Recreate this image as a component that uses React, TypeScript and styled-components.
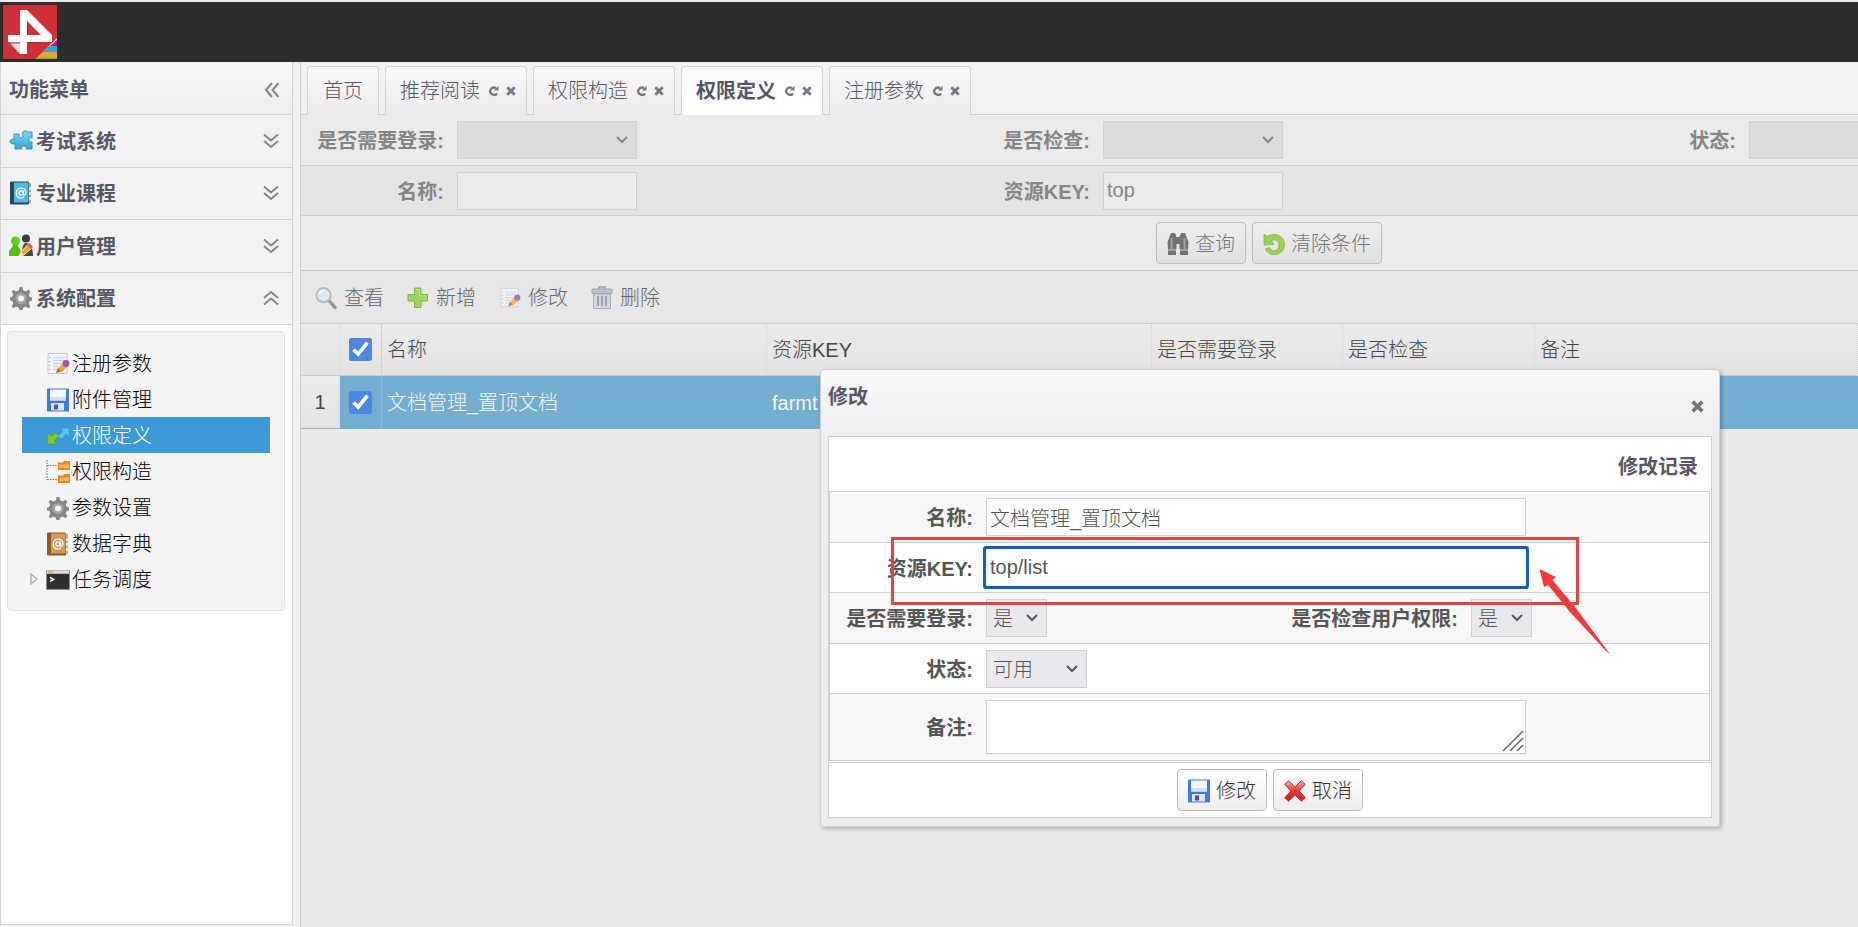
import React, { useId } from "react";
import styled, { createGlobalStyle, css } from "styled-components";

const GlobalStyle = createGlobalStyle`
  *, *::before, *::after { box-sizing: border-box; }
  html, body, #root { height: 100%; }
  body {
    margin: 0;
    overflow: hidden;
    background: #f2f2f2;
    font-family: "Liberation Sans", "Noto Sans CJK SC", sans-serif;
    font-size: 20px;
    font-weight: 300;
    line-height: 24px;
    color: #000;
  }
  button, input, select, textarea {
    font: inherit;
    color: inherit;
    margin: 0;
  }
  button { background: none; border: 0; padding: 0; cursor: pointer; }
  svg { display: block; flex: none; }
`;

/* ---------- page frame ---------- */

const Page = styled.div`
  display: flex;
  flex-direction: column;
  height: 100vh;
`;

const TopBar = styled.header`
  flex: none;
  height: 62px;
  padding: 3px;
  border-top: 2px solid #ececec;
  background: #2d2d2d;
`;

const Body = styled.div`
  flex: 1;
  min-height: 0;
  display: flex;
`;

const Sidebar = styled.aside`
  flex: none;
  display: flex;
  flex-direction: column;
  width: 293px;
  margin-bottom: 2px;
  border: 1px solid #d3d3d3;
  border-top: 0;
  background: #fff;
`;

const SideTitle = styled.div`
  display: flex;
  align-items: center;
  justify-content: space-between;
  height: 53px;
  padding: 4px 12px 0 8px;
  border-bottom: 1px solid #d3d3d3;
  background: linear-gradient(#f8f8f8, #eeeeee);
  font-weight: 700;
  color: #575765;
`;

const Groups = styled.nav`
  display: grid;
  grid-auto-rows: 1fr;
  height: 210px;
`;

const GroupButton = styled.button`
  display: flex;
  align-items: center;
  gap: 3px;
  padding: 0 13px 0 8px;
  border-bottom: 1px solid #d3d3d3;
  background: #f2f2f2;
  font-weight: 700;
  color: #575765;
`;

const GroupLabel = styled.span`
  flex: 1;
  padding-top: 2px;
  text-align: left;
`;

const Tree = styled.ul`
  list-style: none;
  margin: 6px 7px 6px 6px;
  padding: 13px 14px;
  border: 1px solid #e3e3e3;
  border-radius: 4px;
  background: #f4f4f4;
`;

const TreeItem = styled.li<{ $active?: boolean }>`
  display: flex;
  align-items: center;
  height: 36px;
  background: ${(p) => (p.$active ? "#3d9ad8" : "transparent")};
  color: ${(p) => (p.$active ? "#fff" : "#000")};
`;

const TreeToggle = styled.span`
  display: flex;
  justify-content: center;
  width: 24px;
`;

const TreeLink = styled.a`
  display: flex;
  align-items: center;
  gap: 2px;
  padding-top: 2px;
  color: inherit;
  text-decoration: none;
`;

const Main = styled.main`
  flex: 1;
  min-width: 0;
  display: flex;
  flex-direction: column;
  margin-left: 7px;
  border-left: 1px solid #cfcfcf;
  background: #eaeaea;
`;

/* ---------- tabs ---------- */

const TabBar = styled.div`
  flex: none;
  display: flex;
  align-items: flex-end;
  gap: 6px;
  height: 53px;
  padding: 0 6px;
  border-bottom: 1px solid #cfcfcf;
  background: #f2f2f2;
`;

const Tab = styled.div<{ $active?: boolean; $plain?: boolean }>`
  display: flex;
  align-items: center;
  gap: 5px;
  height: 49px;
  margin-bottom: -1px;
  padding: ${(p) => (p.$plain ? "0 15px" : "0 7px 0 14px")};
  border: 1px solid #d3d3d3;
  border-bottom: 0;
  border-radius: 4px 4px 0 0;
  background: ${(p) => (p.$active ? "linear-gradient(#f8f8f8, #ffffff 60%)" : "linear-gradient(#f9f9f9, #ebebeb)")};
  color: #575765;
  font-weight: ${(p) => (p.$active ? 700 : 300)};
`;

const TabTools = styled.div`
  display: flex;
`;

const TabTool = styled.button`
  width: 17px;
  height: 16px;
  display: flex;
  align-items: center;
  justify-content: center;
`;

/* ---------- shared fields ---------- */

const fieldBox = css`
  height: 38px;
  border: 1px solid #d0d0d0;
  border-radius: 0;
  outline: none;
`;

const TextInput = styled.input<{ $width: number; $muted?: boolean; $focused?: boolean }>`
  ${fieldBox}
  width: ${(p) => p.$width}px;
  padding: 0 3px;
  background: ${(p) => (p.$muted ? "#ebebeb" : "#fff")};
  ${(p) =>
    p.$focused &&
    css`
      height: 37px;
      border-color: #fff;
      border-radius: 1px;
      box-shadow: 0 0 0 3px #0f5fc4;
    `}
`;

const SelectWrap = styled.span<{ $width: number }>`
  position: relative;
  display: block;
  width: ${(p) => p.$width}px;

  svg {
    position: absolute;
    right: 9px;
    top: 15px;
    pointer-events: none;
  }
`;

const SelectBox = styled.select<{ $muted?: boolean }>`
  ${fieldBox}
  display: block;
  appearance: none;
  width: 100%;
  padding: 2px 6px 0;
  background: ${(p) => (p.$muted ? "#dcdcdf" : "#e9e9ed")};
`;

const PushButton = styled.button`
  display: flex;
  align-items: center;
  gap: 6px;
  height: 42px;
  padding: 1px 10px 0;
  border: 1px solid #bbb;
  border-radius: 4px;
  background: linear-gradient(#ffffff, #eeeeee);
  color: #333;

  svg { width: 22px; }
`;

const MutedPushButton = styled(PushButton)`
  background: linear-gradient(#efefef, #e0e0e0);
  color: #777;

  svg { opacity: 0.75; }
`;

/* ---------- search form ---------- */

const SearchForm = styled.form`
  flex: none;
  overflow: hidden;
  color: #858585;
`;

const SearchRow = styled.div`
  display: grid;
  grid-template-columns: repeat(3, 156px 490px);
  align-items: center;
  width: 1938px;
  height: 51px;
  border-bottom: 1px solid #cfcfcf;
  background: #ebebeb;

  &:nth-child(2) {
    height: 50px;
    background: #e5e5e5;
  }
`;

const FieldLabel = styled.label<{ $width?: number }>`
  width: ${(p) => (p.$width ? `${p.$width}px` : "auto")};
  padding: 2px 13px 0 0;
  text-align: right;
  font-weight: 700;
`;

const SearchActions = styled.div`
  display: flex;
  align-items: center;
  justify-content: center;
  gap: 6px;
  width: 1936px;
  height: 55px;
  border-bottom: 1px solid #c8c8c8;
  background: #ebebeb;
`;

/* ---------- data grid ---------- */

const Toolbar = styled.div`
  flex: none;
  display: flex;
  align-items: center;
  gap: 23px;
  height: 53px;
  padding: 2px 14px 0;
  border-bottom: 1px solid #cfcfcf;
  background: #e7e7e7;
`;

const ToolButton = styled.button`
  display: flex;
  align-items: center;
  gap: 7px;
  color: #666;

  svg {
    width: 22px;
    opacity: 0.75;
  }
`;

const Grid = styled.table`
  flex: none;
  width: 100%;
  table-layout: fixed;
  border-collapse: separate;
  border-spacing: 0;

  th, td {
    height: 53px;
    padding: 0 5px;
    text-align: left;
    font-weight: 300;
    white-space: nowrap;
    overflow: hidden;
  }
  th {
    height: 52px;
    border-bottom: 1px solid #cfcfcf;
    border-right: 1px dotted #d6d6d6;
    background: linear-gradient(#ebebeb, #e3e3e3);
    color: #444;
  }
  td {
    background: #75add1;
    color: #f2f8fc;
  }
  tbody th {
    height: 53px;
    background: linear-gradient(#ececec, #e4e4e4);
    border-bottom-color: #9fb4c2;
    text-align: center;
  }
`;

const CheckCell = styled.td`
  && {
    padding: 0 0 0 9px;
    border-right: 1px dotted #a3c6dc;
  }
`;

const Check = styled.input`
  display: block;
  width: 23px;
  height: 23px;
  accent-color: #4c87e0;
`;

/* ---------- dialog ---------- */

const Workspace = styled.div`
  flex: 1;
  min-height: 0;
  position: relative;
  display: flex;
  flex-direction: column;
`;

const Dialog = styled.section`
  position: absolute;
  left: 519px;
  top: 254px;
  width: 900px;
  padding: 0 7px 8px;
  border: 1px solid #d0d0d0;
  border-radius: 4px;
  background: linear-gradient(#f8f8f8, #eeeeee 66px);
  box-shadow: 2px 2px 4px rgba(0, 0, 0, 0.25);
  color: #555;
`;

const DialogHead = styled.div`
  display: flex;
  justify-content: space-between;
  height: 66px;
  padding-top: 15px;
`;

const Heading = styled.h2`
  margin: 0;
  font-size: 20px;
  font-weight: 700;
  color: #575765;
`;

const CloseButton = styled.button`
  align-self: flex-start;
  margin: 15px 8px 0 0;
`;

const DialogBody = styled.form`
  border: 1px solid #d0d0d0;
  background: #fff;
`;

const RecordTitle = styled.div`
  display: flex;
  align-items: center;
  justify-content: flex-end;
  height: 54px;
  padding: 6px 13px 0 0;
`;

const Rows = styled.div`
  border: 1px solid #cfcfcf;
  border-bottom-width: 0;
  margin-right: 1px;
`;

const Row = styled.div`
  display: flex;
  align-items: center;
  height: 51px;
  border-bottom: 1px solid #d0d0d0;
  background: #f7f7f7;

  &:nth-child(even) {
    height: 50px;
    background: #fff;
  }
  &:last-child {
    height: 67px;
  }
`;

const FieldCell = styled.div<{ $width?: number }>`
  flex: ${(p) => (p.$width ? "none" : 1)};
  width: ${(p) => (p.$width ? `${p.$width}px` : "auto")};
`;

const AreaWrap = styled.div`
  position: relative;
  width: 540px;

  svg {
    position: absolute;
    right: 2px;
    bottom: 2px;
  }
`;

const Area = styled.textarea`
  ${fieldBox}
  display: block;
  width: 100%;
  height: 54px;
  resize: none;
  background: #fff;
`;

const DialogActions = styled.div`
  display: flex;
  align-items: center;
  justify-content: center;
  gap: 6px;
  height: 55px;
  margin-top: 1px;
  border-top: 1px solid #d0d0d0;
`;

/* Callout marks lie over the dialog. */
const Callout = styled.div`
  position: absolute;
  left: 590px;
  top: 422px;
  width: 688px;
  height: 68px;
  border: 3px solid #e54444;
  pointer-events: none;
`;

const Pointer = styled.svg`
  position: absolute;
  left: 1237px;
  top: 453px;
  pointer-events: none;
`;

/* ---------- icons ---------- */

const Logo = () => (
  <svg width="54" height="54" viewBox="0 0 54 54" role="img" aria-label="logo">
    <rect width="54" height="54" fill="#d03035" />
    <path d="M54 33L33 54h21z" fill="#f7f0ee" />
    <path d="M54 35l-7 6h7z" fill="#c2117f" />
    <path d="M46 41h8v6H40z" fill="#29a9e0" />
    <path d="M40 47h14v5H34.500z" fill="#f5a01e" />
    <path d="M35 52h19v2H33z" fill="#8cb83c" />
    <path d="M5 36l12 13h7v-5l-8-8z" fill="#dedede" />
    <path d="M17 5h7v44h-7z" fill="#fff" />
    <path d="M18 5h6l25 25v7H38v-7L24 16z" fill="#fafafa" />
    <path d="M5 30h44v7H5z" fill="#fff" />
    <path d="M6 38h11M24 38h14" stroke="#a6262a" />
    <path d="M24.500 17v13" stroke="#a6262a" />
  </svg>
);

const Chevrons = ({ turn }: { turn: number }) => (
  <svg width="16" height="16" viewBox="0 0 16 16" fill="none" stroke="#858585" strokeWidth="2">
    <g transform={`rotate(${turn} 8 8)`}>
      <path d="M1 1.500l7 6 7-6M1 8l7 6 7-6" />
    </g>
  </svg>
);

const Arrow = ({ color }: { color: string }) => (
  <svg width="12" height="8" viewBox="0 0 12 8" fill="none" stroke={color} strokeWidth="2">
    <path d="M1 1l5 5 5-5" />
  </svg>
);

const Reload = () => (
  <svg width="12" height="12" viewBox="0 0 12 12" fill="none" stroke="#777" strokeWidth="2.400">
    <path d="M9.200 8.600A4 3.600 0 1 1 8 3" />
    <path d="M6 5.500L10.500 5.500V.8z" fill="#777" stroke="none" />
  </svg>
);

const Cross = ({ size = 12, color = "#76798a" }: { size?: number; color?: string }) => (
  <svg width={size} height={size} viewBox="0 0 12 12" stroke={color} strokeWidth="3.400">
    <path d="M1.500 1.500l9 9M10.500 1.500l-9 9" />
  </svg>
);

const Triangle = () => (
  <svg width="10" height="14" viewBox="0 0 10 14" fill="#fff" stroke="#b0b0b0" strokeWidth="1.500">
    <path d="M2 2l6 5-6 5z" />
  </svg>
);

const Puzzle = () => {
  const id = useId();
  return (
    <svg width="24" height="24" viewBox="0 0 24 24">
      <defs>
        <linearGradient id={id} x2="0" y2="1">
          <stop offset="0" stopColor="#8ad8f0" />
          <stop offset="1" stopColor="#2ba3cf" />
        </linearGradient>
      </defs>
      <path
        d="M5 5h4c1.500 0 1 1 1 2 0 2 4 2 4 0 0-1-1-2 0-4 1-1.500 4-1.500 4.500 0H23v6c-3-2-5 4-1 4h1v7h-6c2-4-6-4-4.500 0H6v-5.500C1 17 -1.500 9 5 10.500z"
        fill={`url(#${id})`}
        stroke="#3193b8"
        strokeLinejoin="round"
      />
    </svg>
  );
};

const Book = ({ spine, cover, edge }: { spine: string; cover: string; edge: string }) => (
  <svg width="24" height="24" viewBox="0 0 24 24">
    <rect x="17" y="2" width="5" height="20" rx="1" fill={edge} />
    <path d="M21 6v3M21 11v3M21 16v3" stroke="#fff" strokeWidth="1.500" />
    <rect x="1" y="0.500" width="19" height="23" rx="1" fill={spine} />
    <rect x="5" y="1.500" width="14.500" height="20" fill={cover} />
    <circle cx="12" cy="12" r="2.200" fill="none" stroke="#fff" strokeWidth="1.200" />
    <path d="M14.200 9.500v3.500c0 2 2.800 1.200 2.800-1.200 0-6.500-9.800-6-9.800.3 0 4.800 4.600 6 7.800 4" fill="none" stroke="#fff" strokeWidth="1.200" />
  </svg>
);

const Users = () => (
  <svg width="24" height="24" viewBox="0 0 24 24">
    <circle cx="17" cy="4.500" r="4" fill="#3c3c40" />
    <path d="M13 22c0-9 1-13 4-13s7 3 7 13z" fill="#46464c" />
    <circle cx="6.500" cy="7" r="4.500" fill="#63cf1b" />
    <path d="M0 22v-4c0-3 4-4 4-7h5c0 3 3 4 3 7v4z" fill="#55bd16" />
    <path d="M10 23l2-5L20 9l4 4-9 8z" fill="#f5a623" stroke="#fff" strokeWidth=".8" />
    <path d="M20 9l4 4-2 2-4-4z" fill="#e25a3c" />
    <path d="M10 23l2-5 3 3z" fill="#fbe5bd" />
  </svg>
);

const Gear = () => (
  <svg width="24" height="24" viewBox="0 0 24 24">
    <path
      d="M10.500 1h3l.6 3.300 2.600 1.100 2.700-1.700 2 2-1.700 2.700 1.100 2.600 2.200.5v3l-2.200.5-1.100 2.600 1.700 2.700-2 2-2.700-1.700-2.600 1.100-.6 2.800h-3l-.6-2.800-2.600-1.100-2.700 1.700-2-2 1.700-2.700-1.100-2.600-2.200-.5v-3l2.200-.5 1.100-2.600-1.700-2.700 2-2 2.700 1.700 2.600-1.100z"
      fill="#868686"
    />
    <circle cx="12" cy="12.500" r="5.500" fill="#a4a4a4" />
    <circle cx="12" cy="12.500" r="3" fill="#f4f4f4" />
  </svg>
);

const Note = () => (
  <svg width="24" height="24" viewBox="0 0 24 24">
    <path d="M2 1.500h19v20H2z" fill="#f5f7fb" stroke="#c3c7cf" />
    <path d="M7 5.500h12M7 8.500h12M7 11.500h9M7 14.500h5M7 17.500h4" stroke="#c3d6ee" strokeWidth="1.400" />
    <path d="M3 5.500h2M3 9.500h2M3 13.500h2M3 17.500h2" stroke="#b9bdc5" />
    <path d="M10 21l2-5 6-6 4 4-6 6z" fill="#f3a73a" />
    <path d="M10 21l2-5 3 3z" fill="#c75a2a" />
    <circle cx="20" cy="11.500" r="3.400" fill="#a44bb8" />
  </svg>
);

const Disk = () => (
  <svg width="22" height="24" viewBox="0 0 22 24">
    <rect y=".5" width="22" height="23" rx="1" fill="#3e7be0" />
    <rect x="3" y="1.500" width="16" height="11" fill="#f3f8ff" />
    <path d="M3 9h16v3.500H3z" fill="#cfe0f8" />
    <rect x="4" y="15" width="13" height="7.500" fill="#dfe6f2" />
    <rect x="7" y="16.500" width="4" height="5" fill="#4a58a8" />
  </svg>
);

const Swap = () => (
  <svg width="24" height="24" viewBox="0 0 24 24">
    <path d="M14 4h9v9l-3-3-4 5-5-2 6-6z" fill="#5cc7ee" stroke="#2f9ccb" strokeWidth=".7" />
    <path d="M2 9l3 3 5-3 3 3-5 5 3 3H1z" fill="#86c828" stroke="#5c9a12" strokeWidth=".7" />
  </svg>
);

const Folders = () => (
  <svg width="24" height="24" viewBox="0 0 24 24">
    <path d="M1 0v19.500M1 5.500h11M1 19.500h11" fill="none" stroke="#777" strokeWidth="1.200" strokeDasharray="1.500 1.200" />
    {[1, 14].map((y) => (
      <g key={y} transform={`translate(12 ${y})`}>
        <path d="M0 1.500h5l1-1.500h6v9H0z" fill="#ee8718" />
        <path d="M1.500 3.500H11V7H1.500z" fill="#fdb453" />
      </g>
    ))}
  </svg>
);

const Terminal = () => (
  <svg width="24" height="24" viewBox="0 0 24 24">
    <rect y="2" width="24" height="20" rx="1" fill="#8d8d8d" />
    <rect x="1" y="2.500" width="22" height="3" fill="#dcdcdc" />
    <rect x="2" y="3" width="5" height="2" fill="#e5b956" />
    <rect x="1" y="6" width="22" height="15" fill="#2e2e2e" />
    <path d="M4 9.500l3.500 2L4 13.500" fill="none" stroke="#fff" strokeWidth="1.500" />
  </svg>
);

const Binoculars = () => (
  <svg width="22" height="24" viewBox="0 0 22 24" fill="#4b4b4b">
    <path d="M4 1h4l1.500 4v12H9v6H1v-6l-.5-7zM14 1h4l3.500 9-.5 7v6h-8v-6h-.5V5z" />
    <rect x="8" y="5" width="6" height="7" />
    <path d="M4.500 6v11M17.500 6v11" stroke="#8d8d8d" strokeWidth="2" />
    <path d="M1 18h8M13 18h8" stroke="#d0d0d0" />
  </svg>
);

const Undo = () => (
  <svg width="22" height="24" viewBox="0 0 22 24">
    <path
      d="M1 2l3 2.500C12-.5 21.500 4 21.500 12.500 21.500 24 6 26 2.500 17l4-1.500C9 21 16 19 16 13c0-4-4-6-7.500-4.500L11 12.500 1 13z"
      fill="#86c726"
      stroke="#5f9c14"
      strokeWidth=".7"
    />
  </svg>
);

const Magnifier = () => (
  <svg width="22" height="24" viewBox="0 0 23 24">
    <path d="M14 14l7 8" stroke="#7c7c7c" strokeWidth="3.500" strokeLinecap="round" />
    <circle cx="9" cy="9" r="7.500" fill="#dbe8f2" stroke="#a3abb3" strokeWidth="2" />
    <path d="M4.500 8c.6-2.500 2.500-3.800 5-3.800" fill="none" stroke="#fff" strokeWidth="1.600" />
  </svg>
);

const Plus = () => (
  <svg width="22" height="24" viewBox="0 0 22 24">
    <path d="M7.500 2h6.500v6.500h6.500V15H14v6.500H7.500V15H1V8.500h6.500z" fill="#87cf2c" stroke="#5da318" strokeLinejoin="round" />
    <path d="M9 3.500h3.500V10H19" fill="none" stroke="#b9ea74" />
  </svg>
);

const Trash = () => (
  <svg width="22" height="24" viewBox="0 0 22 24">
    <path d="M8 3V1h6v2" fill="none" stroke="#868b98" strokeWidth="1.500" />
    <rect x="1" y="3" width="20" height="4.500" rx="1" fill="#b3b8c6" stroke="#868b98" />
    <path d="M2.500 8h17v14.500h-17z" fill="#cdd2e0" stroke="#9196a5" />
    <path d="M7 10v10M11 10v10M15 10v10" stroke="#868b9c" strokeWidth="2" />
  </svg>
);

const RedCross = () => {
  const id = useId();
  return (
    <svg width="24" height="24" viewBox="0 0 24 24">
      <defs>
        <linearGradient id={id} x2="0" y2="1">
          <stop offset="0" stopColor="#f6a9a0" />
          <stop offset=".5" stopColor="#e23a3a" />
          <stop offset="1" stopColor="#d31c22" />
        </linearGradient>
      </defs>
      <path
        d="M5 .8l7 6.700 7-6.700 4.200 4-6.700 7.200 6.700 7.200-4.200 4-7-6.700-7 6.700-4.200-4L7.500 12 .8 4.800z"
        fill={`url(#${id})`}
        stroke="#c2272b"
        strokeLinejoin="round"
      />
    </svg>
  );
};

const Grip = () => (
  <svg width="22" height="22" viewBox="0 0 22 22" stroke="#666" strokeWidth="1.500">
    <path d="M1 21L21 1M8 21L21 8M15 21l6-6" />
  </svg>
);

/* ---------- content ---------- */

const groups = [
  { name: "考试系统", icon: <Puzzle /> },
  { name: "专业课程", icon: <Book spine="#2b4552" cover="#4fb9df" edge="#9aa4aa" /> },
  { name: "用户管理", icon: <Users /> },
  { name: "系统配置", icon: <Gear />, open: true },
];

const menu = [
  { name: "注册参数", icon: <Note /> },
  { name: "附件管理", icon: <Disk /> },
  { name: "权限定义", icon: <Swap />, active: true },
  { name: "权限构造", icon: <Folders /> },
  { name: "参数设置", icon: <Gear /> },
  { name: "数据字典", icon: <Book spine="#8a5a2c" cover="#d39a58" edge="#c4ab8d" /> },
  { name: "任务调度", icon: <Terminal />, branch: true },
];

const MenuIcon = styled.span`
  display: flex;
  justify-content: center;
  width: 24px;
`;

const tabs = ["首页", "推荐阅读", "权限构造", "权限定义", "注册参数"];

const tools = [
  { name: "查看", icon: <Magnifier /> },
  { name: "新增", icon: <Plus /> },
  { name: "修改", icon: <Note /> },
  { name: "删除", icon: <Trash /> },
];

type SelectProps = { id: string; width: number; value?: string; muted?: boolean };

const Select = ({ id, width, value = "", muted }: SelectProps) => (
  <SelectWrap $width={width}>
    <SelectBox id={id} defaultValue={value} $muted={muted}>
      <option value={value}>{value}</option>
    </SelectBox>
    <Arrow color={muted ? "#858585" : "#555"} />
  </SelectWrap>
);

const EditDialog = () => (
  <Dialog role="dialog" aria-labelledby="dialog-title">
    <DialogHead>
      <Heading id="dialog-title">修改</Heading>
      <CloseButton type="button" aria-label="关闭">
        <Cross size={13} color="#777" />
      </CloseButton>
    </DialogHead>
    <DialogBody>
      <RecordTitle>
        <Heading>修改记录</Heading>
      </RecordTitle>
      <Rows>
        <Row>
          <FieldLabel $width={156} htmlFor="e-name">名称:</FieldLabel>
          <TextInput id="e-name" $width={540} defaultValue="文档管理_置顶文档" />
        </Row>
        <Row>
          <FieldLabel $width={156} htmlFor="e-key">资源KEY:</FieldLabel>
          <TextInput id="e-key" $width={540} $focused defaultValue="top/list" />
        </Row>
        <Row>
          <FieldLabel $width={156} htmlFor="e-login">是否需要登录:</FieldLabel>
          <FieldCell $width={305}>
            <Select id="e-login" width={61} value="是" />
          </FieldCell>
          <FieldLabel $width={180} htmlFor="e-check">是否检查用户权限:</FieldLabel>
          <FieldCell>
            <Select id="e-check" width={61} value="是" />
          </FieldCell>
        </Row>
        <Row>
          <FieldLabel $width={156} htmlFor="e-state">状态:</FieldLabel>
          <Select id="e-state" width={101} value="可用" />
        </Row>
        <Row>
          <FieldLabel $width={156} htmlFor="e-note">备注:</FieldLabel>
          <AreaWrap>
            <Area id="e-note" />
            <Grip />
          </AreaWrap>
        </Row>
      </Rows>
      <DialogActions>
        <PushButton type="button">
          <Disk />
          修改
        </PushButton>
        <PushButton type="button">
          <RedCross />
          取消
        </PushButton>
      </DialogActions>
    </DialogBody>
  </Dialog>
);

export default function App() {
  return (
    <Page>
      <GlobalStyle />
      <TopBar>
        <Logo />
      </TopBar>
      <Body>
        <Sidebar>
          <SideTitle>
            功能菜单
            <button type="button" aria-label="折叠">
              <Chevrons turn={90} />
            </button>
          </SideTitle>
          <Groups>
            {groups.map((g) => (
              <GroupButton type="button" key={g.name}>
                {g.icon}
                <GroupLabel>{g.name}</GroupLabel>
                <Chevrons turn={g.open ? 180 : 0} />
              </GroupButton>
            ))}
          </Groups>
          <Tree>
            {menu.map((m) => (
              <TreeItem key={m.name} $active={m.active}>
                <TreeToggle>{m.branch && <Triangle />}</TreeToggle>
                <TreeLink href="#">
                  <MenuIcon>{m.icon}</MenuIcon>
                  {m.name}
                </TreeLink>
              </TreeItem>
            ))}
          </Tree>
        </Sidebar>
        <Main>
          <TabBar>
            {tabs.map((name, i) => (
              <Tab key={name} $active={name === "权限定义"} $plain={i === 0}>
                <button type="button">{name}</button>
                {i > 0 && (
                  <TabTools>
                    <TabTool type="button" aria-label="刷新">
                      <Reload />
                    </TabTool>
                    <TabTool type="button" aria-label="关闭">
                      <Cross size={10} />
                    </TabTool>
                  </TabTools>
                )}
              </Tab>
            ))}
          </TabBar>
          <Workspace>
            <SearchForm>
              <SearchRow>
                <FieldLabel htmlFor="q-login">是否需要登录:</FieldLabel>
                <Select id="q-login" width={180} muted />
                <FieldLabel htmlFor="q-check">是否检查:</FieldLabel>
                <Select id="q-check" width={180} muted />
                <FieldLabel htmlFor="q-state">状态:</FieldLabel>
                <Select id="q-state" width={180} muted />
              </SearchRow>
              <SearchRow>
                <FieldLabel htmlFor="q-name">名称:</FieldLabel>
                <TextInput id="q-name" $width={180} $muted />
                <FieldLabel htmlFor="q-key">资源KEY:</FieldLabel>
                <TextInput id="q-key" $width={180} $muted defaultValue="top" />
              </SearchRow>
              <SearchActions>
                <MutedPushButton type="button">
                  <Binoculars />
                  查询
                </MutedPushButton>
                <MutedPushButton type="button">
                  <Undo />
                  清除条件
                </MutedPushButton>
              </SearchActions>
            </SearchForm>
            <Toolbar>
              {tools.map((t) => (
                <ToolButton type="button" key={t.name}>
                  {t.icon}
                  {t.name}
                </ToolButton>
              ))}
            </Toolbar>
            <Grid>
              <colgroup>
                <col style={{ width: 39 }} />
                <col style={{ width: 42 }} />
                <col style={{ width: 385 }} />
                <col style={{ width: 385 }} />
                <col style={{ width: 191 }} />
                <col style={{ width: 192 }} />
                <col />
              </colgroup>
              <thead>
                <tr>
                  <th />
                  <CheckCell as="th">
                    <Check type="checkbox" defaultChecked aria-label="全选" />
                  </CheckCell>
                  <th>名称</th>
                  <th>资源KEY</th>
                  <th>是否需要登录</th>
                  <th>是否检查</th>
                  <th>备注</th>
                </tr>
              </thead>
              <tbody>
                <tr>
                  <th scope="row">1</th>
                  <CheckCell>
                    <Check type="checkbox" defaultChecked aria-label="选择第1行" />
                  </CheckCell>
                  <td>文档管理_置顶文档</td>
                  <td>farmt</td>
                  <td />
                  <td />
                  <td />
                </tr>
              </tbody>
            </Grid>
            <EditDialog />
            <Callout />
            <Pointer width="74" height="88" viewBox="0 0 74 88" fill="#f53a3a">
              <path d="M1.500 1l16.500 8-3.500 3L37 39l35 47-4-3L32 44 10 17l-4 2z" />
            </Pointer>
          </Workspace>
        </Main>
      </Body>
    </Page>
  );
}
